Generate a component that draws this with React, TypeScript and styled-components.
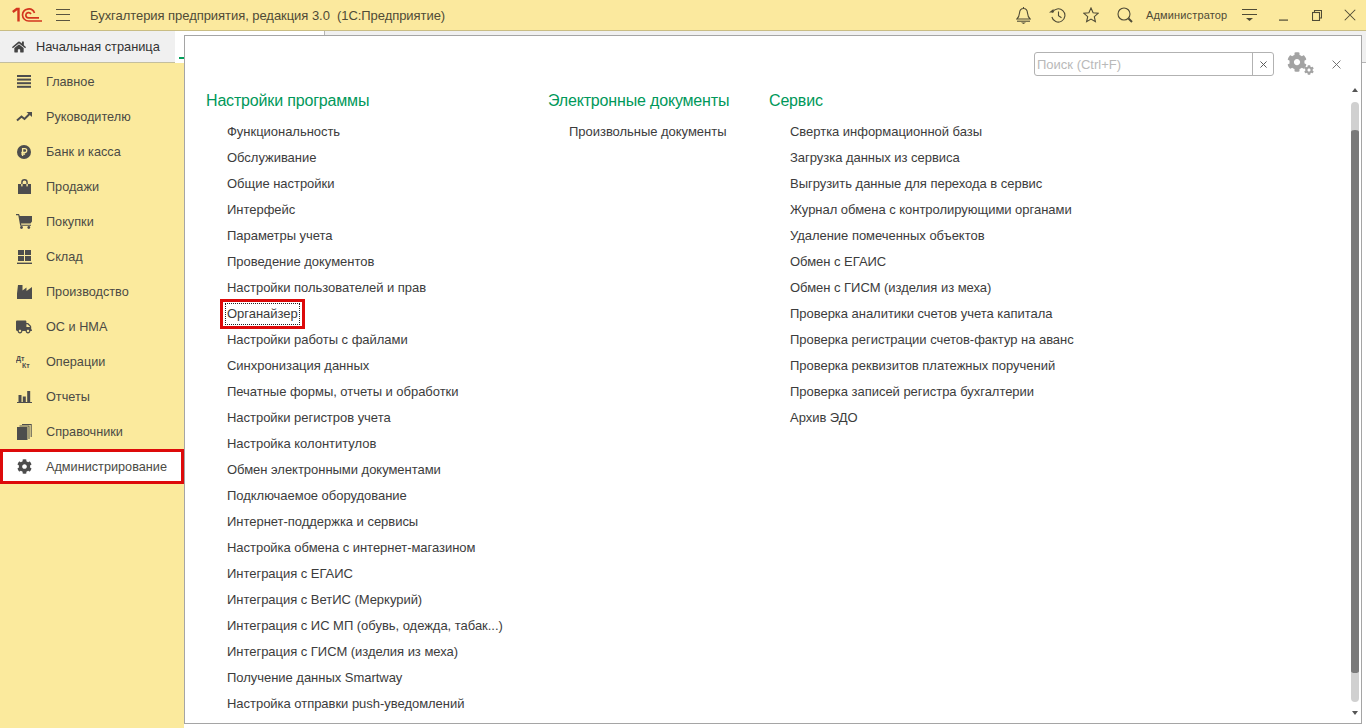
import React from 'react';
import styled, { createGlobalStyle } from 'styled-components';
import { FaHome, FaCog, FaTruck } from 'react-icons/fa';

const Global = createGlobalStyle`
  html, body { margin: 0; padding: 0; height: 100%; overflow: hidden; background: #fff; }
  body { font-family: "Liberation Sans", Arial, sans-serif; }
  #root { height: 100%; }
`;

const Page = styled.div`
  width: 1366px; height: 728px; display: flex; flex-direction: column; overflow: hidden;
  color: #333; font-size: 13px;
`;
const TopBar = styled.header`
  height: 30px; flex: none; display: flex; align-items: center; background: #fbe99e;
  border-bottom: 1px solid #c9bd84; color: #4a4a3c;
`;
const Logo = styled.svg`
  width: 30px; height: 16px; margin-left: 12px; flex: none;
`;
const Burger = styled.button`
  width: 14px; height: 12px; margin: 0 20px 0 14px; padding: 0; border: 0; flex: none; background: none;
  border-top: 1px solid #5a5440; border-bottom: 1px solid #5a5440; position: relative;
  &::after { content: ""; position: absolute; left: 0; right: 0; top: 4px; height: 1px; background: #5a5440; }
`;
const AppTitle = styled.div`
  flex: 1; font-size: 13px; white-space: pre; letter-spacing: -0.05px; color: #4f4b36;
`;
const Slot = styled.div<{ $w?: number }>`
  width: ${p => p.$w ?? 34}px; height: 30px; display: flex; align-items: center; justify-content: center; flex: none;
`;
const UserName = styled.div`
  width: 82px; margin: 0 4px; font-size: 11px; white-space: nowrap; color: #4f4b36; letter-spacing: 0.15px;
`;
const Body = styled.div`
  flex: 1; min-height: 0; display: flex;
`;
const LeftColumn = styled.div`
  width: 184px; flex: none; display: flex; flex-direction: column;
`;
const HomeRow = styled.div`
  height: 32px; flex: none; display: flex; background: #fff;
`;
const HomeTab = styled.div`
  width: 175px; display: flex; align-items: center; gap: 10px; padding-left: 12px; box-sizing: border-box;
  background: #f0f0f0; border-bottom: 1px solid #c4bf9e; font-size: 12.8px; color: #333; white-space: nowrap;
`;
const TabGap = styled.div`
  flex: 1; display: flex; align-items: flex-end; justify-content: flex-end; padding-bottom: 3px; box-sizing: border-box;
  border-bottom: 1px solid #fff;
`;
const GreenMark = styled.span`
  width: 5px; height: 2px; background: #00a05a;
`;
const Sidebar = styled.nav`
  flex: 1; background: #fbea9d; padding-top: 1px; display: flex; flex-direction: column;
`;
const NavItem = styled.div<{ $active?: boolean }>`
  height: 35px; box-sizing: border-box; display: flex; align-items: center; flex: none; font-size: 12.7px; color: #4b4b45;
  padding-left: 17px; gap: 15px; white-space: nowrap;
  ${p => p.$active ? `background: #fff; border: 3px solid #dd0a0a; padding-left: 14px;` : ''}
`;
const NavIcon = styled.span`
  width: 14px; height: 16px; display: flex; align-items: center; justify-content: center; flex: none; color: #4d4d4d;
  svg { display: block; flex: none; }
`;
const RightColumn = styled.div`
  flex: 1; min-width: 0; display: flex; flex-direction: column; padding-bottom: 4px;
`;
const TabStrip = styled.div`
  height: 4px; flex: none; display: flex;
`;
const StripWhite = styled.div`
  width: 140px; background: #fff; border-right: 1px solid #b5b5b5;
`;
const StripGray = styled.div`
  flex: 1; background: #f0f0f0;
`;
const Frame = styled.div`
  flex: 1; min-height: 0; display: flex;
`;
const Panel = styled.main`
  flex: none; width: 1178px; box-sizing: border-box; border: 1px solid #a5a5a5;
  display: flex; flex-direction: column; background: #fff;
`;
const FrameEdge = styled.div`
  flex: 1; background: #fff;
`;
const EdgeTab = styled.div`
  height: 28px; box-sizing: border-box; background: #f0f0f0; border-bottom: 1px solid #b5b5b5;
`;
const PanelHead = styled.div`
  height: 50px; flex: none; display: flex; justify-content: flex-end; align-items: flex-start; padding-top: 16px; box-sizing: border-box;
`;
const Search = styled.div`
  width: 240px; height: 24px; box-sizing: border-box; border: 1px solid #b2b2b2; border-radius: 3px; display: flex; flex: none;
`;
const SearchText = styled.div`
  flex: 1; color: #b9b9b9; font-size: 13px; line-height: 23px; padding-left: 2px;
  border-right: 1px solid #b2b2b2;
`;
const SearchClear = styled.div`
  width: 20px; display: flex; align-items: center; justify-content: center;
`;
const GearBox = styled.div`
  width: 26px; height: 24px; margin: 0 16px 0 13px; position: relative; flex: none; color: #a3a3a3;
  svg { position: absolute; }
`;
const HeadClose = styled.div`
  width: 15px; margin-right: 17px; height: 24px; display: flex; align-items: center; justify-content: center; flex: none;
`;
const PanelBody = styled.div`
  flex: 1; min-height: 0; display: flex;
`;
const Columns = styled.div`
  flex: 1; min-width: 0; display: flex; padding: 5px 0 0 21px; overflow: hidden;
`;
const Column = styled.section<{ $w: number }>`
  width: ${p => p.$w}px; flex: none;
`;
const ColumnTitle = styled.h2`
  margin: 0 0 8px; font-weight: 400; font-size: 16px; line-height: 20px; color: #00985a; white-space: nowrap; letter-spacing: -0.17px;
`;
const Link = styled.div`
  height: 26px; line-height: 26px; padding-left: 21px; font-size: 13px; color: #3c3c3c; white-space: nowrap; letter-spacing: -0.03px;
`;
const Focused = styled.span`
  position: relative; display: inline-block; line-height: 20px;
  outline: 1px dotted #222; outline-offset: 0; padding: 0 1px; margin-left: -1px;
  &::after {
    content: ""; position: absolute; left: -6px; right: -6px; top: -5px; bottom: -5px; border: 3px solid #dd0a0a; pointer-events: none;
  }
`;
const ScrollBar = styled.div`
  width: 8px; margin-right: 2px; flex: none; display: flex; flex-direction: column; align-items: center;
  padding-top: 2px; padding-bottom: 8px; box-sizing: border-box;
`;
const ArrowUp = styled.span`
  width: 0; height: 0; border: 3px solid transparent; border-top: 0; border-bottom: 4px solid #555; flex: none; margin-bottom: 10px;
`;
const ArrowDown = styled.span`
  width: 0; height: 0; border: 3px solid transparent; border-bottom: 0; border-top: 4px solid #555; flex: none; margin-top: 9px;
`;
const Track = styled.div`
  flex: 1; width: 8px; background: #d0d0d0; border-radius: 4px; padding: 28px 0 29px; box-sizing: border-box; display: flex;
`;
const Thumb = styled.div`
  flex: 1; background: #7a7a7a; border-radius: 4px 4px 4px 4px / 2px;
`;

const Close = ({ s = 8, c = '#666', w = 1.1 }: { s?: number; c?: string; w?: number }) => (
  <svg width={s} height={s} viewBox="0 0 8 8" fill="none" stroke={c} strokeWidth={w}><path d="M.5.5l7 7M7.500.5l-7 7" /></svg>
);

const Cog = ({ size, style }: { size: number; style?: React.CSSProperties }) => <FaCog size={size} style={style} />;

const icons: Record<string, React.ReactNode> = {
  main: (
    <svg width="14" height="13" viewBox="0 0 14 13" fill="currentColor">
      <rect y="0" width="14" height="2" /><rect y="3.600" width="14" height="2" /><rect y="7.200" width="14" height="2" /><rect y="10.800" width="14" height="2" />
    </svg>
  ),
  boss: (
    <svg width="16" height="10" viewBox="0 0 16 10" fill="none">
      <path d="M1 8.500l4.500-4 3 2.500 5-5" stroke="currentColor" strokeWidth="2" />
      <path d="M10.500 0H16v5z" fill="currentColor" />
    </svg>
  ),
  bank: (
    <svg width="14" height="14" viewBox="0 0 14 14">
      <circle cx="7" cy="7" r="7" fill="currentColor" />
      <path d="M5.600 11V3.600h2.200a1.900 1.900 0 0 1 0 3.900H4.300M4.300 9.200h3.800" fill="none" stroke="#fbea9d" strokeWidth="1.300" />
    </svg>
  ),
  bag: (
    <svg width="13" height="15" viewBox="0 0 13 15" fill="currentColor">
      <path d="M0 5h3.200V3.400a3.300 3.300 0 0 1 6.600 0V5H13v10H0zM4.600 5h3.800V3.400a1.900 1.900 0 0 0-3.800 0z" fillRule="evenodd" />
      <rect x="3.200" y="5" width="1.400" height="2.400" fill="#fbea9d" /><rect x="8.400" y="5" width="1.400" height="2.400" fill="#fbea9d" />
    </svg>
  ),
  cart: (
    <svg width="16" height="15" viewBox="0 0 16 15" fill="currentColor">
      <path d="M0 0h3l.8 2H16v5.500l-1.500 2H5l.3 1.200h9.700v1H4.200L2.300 1.200H0z" />
      <circle cx="5.500" cy="13.500" r="1.400" /><circle cx="12.800" cy="13.500" r="1.400" />
    </svg>
  ),
  stock: (
    <svg width="15" height="14" viewBox="0 0 15 14" fill="currentColor">
      <rect x="1" y="0" width="6" height="5" /><rect x="8" y="0" width="6" height="5" />
      <rect x="1" y="6" width="6" height="5" /><rect x="8" y="6" width="6" height="5" />
      <rect x="0" y="12.600" width="15" height="1.400" />
    </svg>
  ),
  factory: (
    <svg width="15" height="14" viewBox="0 0 15 14" fill="currentColor">
      <path d="M0 14V8.500L1 0h4.500v5.500L9.500 2.500v3.500L15 2v12z" />
    </svg>
  ),
  truck: <FaTruck size={16} />,
  ops: (
    <svg width="16" height="15" viewBox="0 0 16 15" fill="currentColor" fontFamily="Liberation Sans, sans-serif" fontWeight="700" fontSize="7">
      <text x="0" y="7">Дт</text><text x="6" y="14">Кт</text>
    </svg>
  ),
  reports: (
    <svg width="15" height="12" viewBox="0 0 15 12" fill="currentColor">
      <rect x="1.500" y="4" width="3" height="7" /><rect x="5.800" y="5.500" width="3" height="5.500" /><rect x="10.200" y="0" width="3" height="11" />
      <rect x="0" y="11" width="15" height="1" />
    </svg>
  ),
  books: (
    <svg width="15" height="16" viewBox="0 0 15 16" fill="currentColor">
      <rect x="0" y="3" width="10.500" height="13" />
      <path d="M11.500 2.500H2.500V1.500h10V15h-1zM13.700 1V13h1V0H5v1z" />
    </svg>
  ),
  admin: <FaCog size={15} />,
};

const navItems: [string, string][] = [
  ['main', 'Главное'], ['boss', 'Руководителю'], ['bank', 'Банк и касса'], ['bag', 'Продажи'],
  ['cart', 'Покупки'], ['stock', 'Склад'], ['factory', 'Производство'], ['truck', 'ОС и НМА'],
  ['ops', 'Операции'], ['reports', 'Отчеты'], ['books', 'Справочники'], ['admin', 'Администрирование'],
];

const col1 = [
  'Функциональность', 'Обслуживание', 'Общие настройки', 'Интерфейс', 'Параметры учета', 'Проведение документов',
  'Настройки пользователей и прав', 'Органайзер', 'Настройки работы с файлами', 'Синхронизация данных',
  'Печатные формы, отчеты и обработки', 'Настройки регистров учета', 'Настройка колонтитулов',
  'Обмен электронными документами', 'Подключаемое оборудование', 'Интернет-поддержка и сервисы',
  'Настройка обмена с интернет-магазином', 'Интеграция с ЕГАИС', 'Интеграция с ВетИС (Меркурий)',
  'Интеграция с ИС МП (обувь, одежда, табак...)', 'Интеграция с ГИСМ (изделия из меха)', 'Получение данных Smartway',
  'Настройка отправки push-уведомлений',
];
const col3 = [
  'Свертка информационной базы', 'Загрузка данных из сервиса', 'Выгрузить данные для перехода в сервис',
  'Журнал обмена с контролирующими органами', 'Удаление помеченных объектов', 'Обмен с ЕГАИС',
  'Обмен с ГИСМ (изделия из меха)', 'Проверка аналитики счетов учета капитала', 'Проверка регистрации счетов-фактур на аванс',
  'Проверка реквизитов платежных поручений', 'Проверка записей регистра бухгалтерии', 'Архив ЭДО',
];

export default function App() {
  const stroke = '#4f4b36';
  return (
    <Page>
      <Global />
      <TopBar>
        <Logo viewBox="0 0 30 16" fill="none" stroke="#d3361f">
          <path d="M.8 5L4.800 2H6.500v12.500" strokeWidth="2.400" />
          <path d="M22.500 6A6.200 6.200 0 0 0 10.500 8a6.200 6.200 0 0 0 6.200 6H30" strokeWidth="1.700" />
          <path d="M19 7A2.800 2.800 0 0 0 13.800 8a2.800 2.800 0 0 0 2.800 2.800H27" strokeWidth="1.700" />
        </Logo>
        <Burger aria-label="меню" />
        <AppTitle>Бухгалтерия предприятия, редакция 3.0  (1С:Предприятие)</AppTitle>
        <Slot>
          <svg width="15" height="18" viewBox="0 0 15 18" fill="none" stroke={stroke} strokeWidth="1.100">
            <path d="M7.500 1v1.500M7.500 2.500c-2.800 0-3.800 2-4 4.500-.2 2.500-1 4.500-2.600 6h13.200c-1.600-1.500-2.400-3.500-2.600-6-.2-2.500-1.200-4.500-4-4.500z" />
            <path d="M1 15.200h13" /><path d="M5 16.500h5L7.500 18z" fill={stroke} stroke="none" />
          </svg>
        </Slot>
        <Slot>
          <svg width="17" height="15" viewBox="0 0 17 15" fill="none" stroke={stroke} strokeWidth="1.100">
            <path d="M3.400 4.500A6.600 6.600 0 1 1 2.900 9" /><path d="M9.500 3.500v4.200l3 2" />
            <path d="M0 4.500h4.500V1z" fill={stroke} stroke="none" />
          </svg>
        </Slot>
        <Slot>
          <svg width="16" height="16" viewBox="0 0 16 16" fill="none" stroke={stroke} strokeWidth="1.100"><path d="M8 1l2.100 4.800 5 .5-3.800 3.400 1.100 5L8 12.100l-4.400 2.600 1.100-5L.9 6.300l5-.5z" /></svg>
        </Slot>
        <Slot>
          <svg width="16" height="16" viewBox="0 0 16 16" fill="none" stroke={stroke}><circle cx="7" cy="7" r="6" strokeWidth="1.100" /><path d="M11.500 11.500l3.500 3.500" strokeWidth="2" /></svg>
        </Slot>
        <UserName>Администратор</UserName>
        <Slot>
          <svg width="15" height="14" viewBox="0 0 15 14" fill={stroke}><rect width="15" height="1" y="1" /><rect width="15" height="1" y="6" x="0" /><path d="M4 10h7l-3.500 3z" /></svg>
        </Slot>
        <Slot>
          <svg width="9" height="12" viewBox="0 0 9 12" fill={stroke}><rect y="10.500" width="9" height="1.200" /></svg>
        </Slot>
        <Slot>
          <svg width="10" height="11" viewBox="0 0 10 11" fill="none" stroke={stroke} strokeWidth="1.100"><rect x=".5" y="2.500" width="7" height="8" /><path d="M2.500 2.500V.5h7v7.500H7.500" /></svg>
        </Slot>
        <Slot $w={32}><Close s={12} c={stroke} w={0.7} /></Slot>
      </TopBar>
      <Body>
        <LeftColumn>
          <HomeRow>
            <HomeTab><FaHome size={14} color="#444" />Начальная страница</HomeTab>
            <TabGap><GreenMark /></TabGap>
          </HomeRow>
          <Sidebar>
            {navItems.map(([k, label], i) => (
              <NavItem key={k} $active={i === navItems.length - 1}>
                <NavIcon>{icons[k]}</NavIcon>{label}
              </NavItem>
            ))}
          </Sidebar>
        </LeftColumn>
        <RightColumn>
          <TabStrip><StripWhite /><StripGray /></TabStrip>
          <Frame>
            <Panel>
              <PanelHead>
                <Search>
                  <SearchText>Поиск (Ctrl+F)</SearchText>
                  <SearchClear><Close s={7} c="#555" /></SearchClear>
                </Search>
                <GearBox>
                  <Cog size={20} style={{ left: 0, top: 0 }} />
                  <Cog size={10} style={{ left: 17, top: 13 }} />
                </GearBox>
                <HeadClose><Close s={9} c="#666" w={0.8} /></HeadClose>
              </PanelHead>
              <PanelBody>
                <Columns>
                  <Column $w={342}>
                    <ColumnTitle>Настройки программы</ColumnTitle>
                    {col1.map(t => <Link key={t}>{t === 'Органайзер' ? <Focused>{t}</Focused> : t}</Link>)}
                  </Column>
                  <Column $w={221}>
                    <ColumnTitle>Электронные документы</ColumnTitle>
                    <Link>Произвольные документы</Link>
                  </Column>
                  <Column $w={400}>
                    <ColumnTitle>Сервис</ColumnTitle>
                    {col3.map(t => <Link key={t}>{t}</Link>)}
                  </Column>
                </Columns>
                <ScrollBar>
                  <ArrowUp />
                  <Track><Thumb /></Track>
                  <ArrowDown />
                </ScrollBar>
              </PanelBody>
            </Panel>
            <FrameEdge><EdgeTab /></FrameEdge>
          </Frame>
        </RightColumn>
      </Body>
    </Page>
  );
}
